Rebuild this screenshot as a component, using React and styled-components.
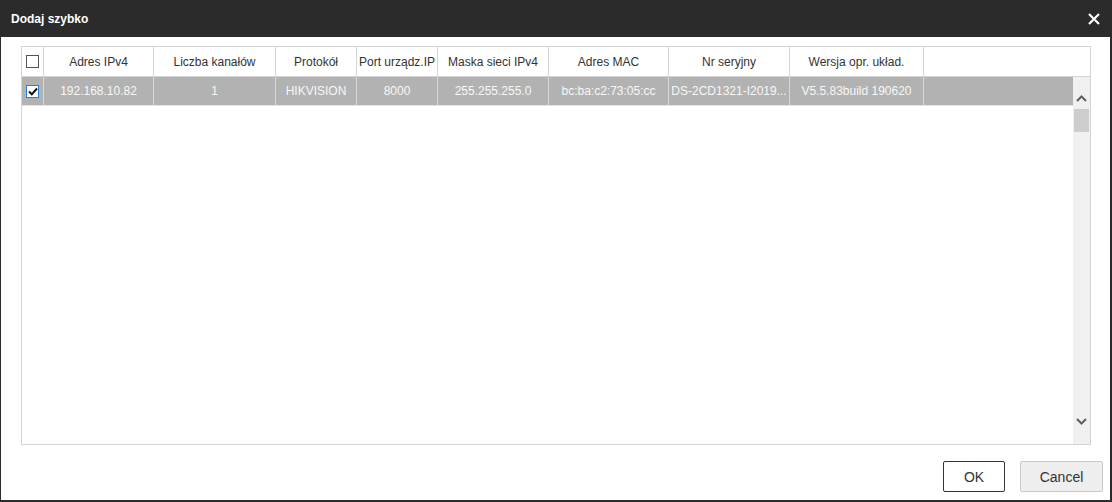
import React from 'react';
import styled, { createGlobalStyle } from 'styled-components';

const GlobalStyle = createGlobalStyle`
  html, body {
    margin: 0;
    padding: 0;
    background: #fff;
  }
  body {
    font-family: "Liberation Sans", Arial, sans-serif;
    font-size: 12px;
  }
`;

const Dialog = styled.div`
  width: 1112px;
  height: 502px;
  box-sizing: border-box;
  display: flex;
  flex-direction: column;
  background: #fff;
  border-left: 1px solid #2b2b2b;
  border-right: 2px solid #2b2b2b;
  border-bottom: 2px solid #2b2b2b;
`;

const TitleBar = styled.header`
  height: 37px;
  margin: 0 -2px 0 -1px;
  padding: 0 11px 0 11px;
  background: #2b2b2b;
  display: flex;
  align-items: center;
  justify-content: space-between;
  color: #fff;
`;

const Title = styled.h1`
  margin: 0;
  font-size: 12px;
  font-weight: bold;
`;

const CloseButton = styled.button`
  border: 0;
  background: none;
  padding: 0;
  width: 14px;
  height: 14px;
  display: flex;
  cursor: pointer;
`;

const Body = styled.main`
  flex: 1;
  padding: 9px 19px 0 20px;
`;

const Grid = styled.div`
  height: 399px;
  box-sizing: border-box;
  border: 1px solid #d4d4d4;
  display: flex;
  flex-direction: column;
`;

const HeadRow = styled.div`
  display: flex;
  height: 29px;
  border-bottom: 1px solid #d4d4d4;
`;

const Cell = styled.div`
  width: ${(p) => p.$w}px;
  flex: ${(p) => (p.$grow ? 1 : 'none')};
  box-sizing: border-box;
  border-right: ${(p) => (p.$last ? 'none' : `1px solid ${p.$line}`)};
  display: flex;
  align-items: center;
  justify-content: center;
  white-space: nowrap;
  overflow: hidden;
  color: ${(p) => p.$color};
`;

const BodyArea = styled.div`
  flex: 1;
  display: flex;
`;

const Rows = styled.div`
  flex: 1;
`;

const DataRow = styled.div`
  display: flex;
  height: 28px;
  background: #b2b2b2;
  border-bottom: 1px solid #e4e4e4;
`;

const Scrollbar = styled.div`
  width: 17px;
  background: #f0f0f0;
  display: flex;
  flex-direction: column;
  align-items: center;
`;

const Arrow = styled.div`
  height: 17px;
  width: 17px;
  display: flex;
  align-items: center;
  justify-content: center;
  margin-top: ${(p) => (p.$down ? 'auto' : '13px')};
  margin-bottom: ${(p) => (p.$down ? '14px' : '0')};
`;

const Thumb = styled.div`
  width: 15px;
  height: 23px;
  background: #cdcdcd;
  margin-top: 2px;
`;

const Box = styled.span`
  width: 11px;
  height: 11px;
  box-sizing: content-box;
  border: 1px solid ${(p) => (p.$checked ? '#2b7bd8' : '#555')};
  background: #fff;
  display: flex;
  align-items: center;
  justify-content: center;
`;

const Footer = styled.footer`
  display: flex;
  justify-content: flex-end;
  gap: 15px;
  padding: 16px 7px 8px 0;
`;

const Button = styled.button`
  height: 31px;
  width: ${(p) => p.$w}px;
  box-sizing: border-box;
  font-family: "Liberation Sans", Arial, sans-serif;
  font-size: 14px;
  color: #333;
  border-radius: 2px;
  border: 1px solid ${(p) => (p.$primary ? '#333' : '#c8c8c8')};
  background: ${(p) => (p.$primary ? '#fff' : '#eeeeee')};
  cursor: pointer;
`;

const columns = [
  { w: 22, label: null },
  { w: 110, label: 'Adres IPv4' },
  { w: 122, label: 'Liczba kanałów' },
  { w: 81, label: 'Protokół' },
  { w: 81, label: 'Port urządz.IP' },
  { w: 111, label: 'Maska sieci IPv4' },
  { w: 120, label: 'Adres MAC' },
  { w: 121, label: 'Nr seryjny' },
  { w: 134, label: 'Wersja opr. układ.' },
];

const row = ['192.168.10.82', '1', 'HIKVISION', '8000', '255.255.255.0', 'bc:ba:c2:73:05:cc', 'DS-2CD1321-I2019...', 'V5.5.83build 190620'];

const Check = ({ checked }) => (
  <Box $checked={checked}>
    {checked && (
      <svg width="10" height="9" viewBox="0 0 10 9">
        <path d="M1 4.5 L3.8 7.3 L9 1.5" fill="none" stroke="#111" strokeWidth="2" />
      </svg>
    )}
  </Box>
);

const Chevron = ({ down }) => (
  <svg width="11" height="7" viewBox="0 0 11 7">
    <path d={down ? 'M1 1 L5.5 5.5 L10 1' : 'M1 6 L5.5 1.5 L10 6'} fill="none" stroke="#606060" strokeWidth="2" />
  </svg>
);

const App = () => (
  <>
    <GlobalStyle />
    <Dialog>
      <TitleBar>
        <Title>Dodaj szybko</Title>
        <CloseButton aria-label="Zamknij">
          <svg width="14" height="14" viewBox="0 0 14 14">
            <path d="M2 2 L12 12 M12 2 L2 12" stroke="#fff" strokeWidth="2.2" />
          </svg>
        </CloseButton>
      </TitleBar>

      <Body>
        <Grid>
          <HeadRow>
            {columns.map((c, i) => (
              <Cell key={i} $w={c.w} $line="#d4d4d4" $color="#333">
                {c.label ?? <Check />}
              </Cell>
            ))}
            <Cell $grow $last />
          </HeadRow>
          <BodyArea>
            <Rows>
              <DataRow>
                <Cell $w={22} $line="#d8d8d8">
                  <Check checked />
                </Cell>
                {row.map((v, i) => (
                  <Cell key={i} $w={columns[i + 1].w} $line="#d8d8d8" $color="#f7f7f7">
                    {v}
                  </Cell>
                ))}
                <Cell $grow $last />
              </DataRow>
            </Rows>
            <Scrollbar>
              <Arrow>
                <Chevron />
              </Arrow>
              <Thumb />
              <Arrow $down>
                <Chevron down />
              </Arrow>
            </Scrollbar>
          </BodyArea>
        </Grid>
      </Body>

      <Footer>
        <Button $primary $w={62}>OK</Button>
        <Button $w={83}>Cancel</Button>
      </Footer>
    </Dialog>
  </>
);

export default App;
